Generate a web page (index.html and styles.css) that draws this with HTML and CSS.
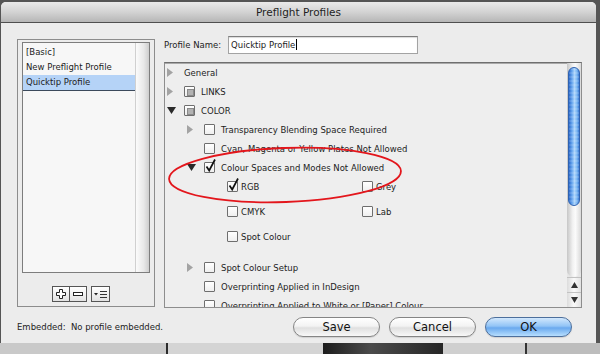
FILE: index.html
```html
<!DOCTYPE html>
<html lang="en">
<head>
    <meta charset="UTF-8">
    <title>Preflight Profiles</title>
    <link rel="stylesheet" href="styles.css">
</head>
<body>
    <div class="window">
        <div class="titlebar">Preflight Profiles</div>
        <div class="content">
            <div class="left-col">
                <div class="profiles-box">
                    <div class="profiles-list">
                        <ul class="profiles">
                            <li>[Basic]</li>
                            <li>New Preflight Profile</li>
                            <li class="selected">Quicktip Profile</li>
                        </ul>
                        <div class="list-track"></div>
                    </div>
                    <div class="list-tools">
                        <div class="tool-pair">
                            <span class="tool">
                                <svg width="10" height="10" viewBox="0 0 10 10"><path d="M3.5 0.5h3v3h3v3h-3v3h-3v-3h-3v-3h3z" fill="#fff" stroke="#222" stroke-width="1"/></svg>
                            </span>
                            <span class="tool tool-minus">
                                <svg width="10" height="4" viewBox="0 0 10 4"><rect x="0.5" y="0.5" width="9" height="3" fill="#fff" stroke="#222" stroke-width="1"/></svg>
                            </span>
                        </div>
                        <span class="tool tool-menu">
                            <svg width="13" height="9" viewBox="0 0 13 9"><path d="M0 3h4l-2 2.5z" fill="#222"/><path d="M6 1.5h7M6 4.5h7M6 7.5h7" stroke="#333" stroke-width="1"/></svg>
                        </span>
                    </div>
                </div>
                <div class="embedded">Embedded:&nbsp; No profile embedded.</div>
            </div>

            <div class="right-col">
                <div class="name-row">
                    <label class="name-label">Profile Name:</label>
                    <div class="name-input">Quicktip Profile<span class="caret"></span></div>
                </div>

                <div class="tree">
                    <div class="tree-rows">
                        <div class="row lvl0">
                            <span class="twisty"><svg width="6" height="9" viewBox="0 0 6 9"><path d="M0 0L6 4.5L0 9z" fill="#a3a3a3"/></svg></span>
                            <span class="label">General</span>
                        </div>
                        <div class="row lvl0">
                            <span class="twisty"><svg width="6" height="9" viewBox="0 0 6 9"><path d="M0 0L6 4.5L0 9z" fill="#a3a3a3"/></svg></span>
                            <span class="check mixed"></span>
                            <span class="label">LINKS</span>
                        </div>
                        <div class="row lvl0">
                            <span class="twisty"><svg width="9" height="7" viewBox="0 0 9 7"><path d="M0 0H9L4.5 7z" fill="#2a2a2a"/></svg></span>
                            <span class="check mixed"></span>
                            <span class="label">COLOR</span>
                        </div>
                        <div class="row lvl1">
                            <span class="twisty"><svg width="6" height="9" viewBox="0 0 6 9"><path d="M0 0L6 4.5L0 9z" fill="#a3a3a3"/></svg></span>
                            <span class="check"></span>
                            <span class="label">Transparency Blending Space Required</span>
                        </div>
                        <div class="row lvl1">
                            <span class="twisty"></span>
                            <span class="check"></span>
                            <span class="label">Cyan, Magenta or Yellow Plates Not Allowed</span>
                        </div>
                        <div class="row lvl1">
                            <span class="twisty"><svg width="9" height="7" viewBox="0 0 9 7"><path d="M0 0H9L4.5 7z" fill="#2a2a2a"/></svg></span>
                            <span class="check checked"><svg class="tick" width="12" height="14" viewBox="0 0 12 14"><path d="M1.5 7.5L4.2 11.5L10 0.5" fill="none" stroke="#111" stroke-width="1.7"/></svg></span>
                            <span class="label">Colour Spaces and Modes Not Allowed</span>
                        </div>
                        <div class="options">
                            <div class="opt">
                                <span class="check checked"><svg class="tick" width="12" height="14" viewBox="0 0 12 14"><path d="M1.5 7.5L4.2 11.5L10 0.5" fill="none" stroke="#111" stroke-width="1.7"/></svg></span>
                                <span class="label">RGB</span>
                            </div>
                            <div class="opt">
                                <span class="check"></span>
                                <span class="label">Grey</span>
                            </div>
                            <div class="opt">
                                <span class="check"></span>
                                <span class="label">CMYK</span>
                            </div>
                            <div class="opt">
                                <span class="check"></span>
                                <span class="label">Lab</span>
                            </div>
                            <div class="opt">
                                <span class="check"></span>
                                <span class="label">Spot Colour</span>
                            </div>
                        </div>
                        <div class="row lvl1 spaced">
                            <span class="twisty"><svg width="6" height="9" viewBox="0 0 6 9"><path d="M0 0L6 4.5L0 9z" fill="#a3a3a3"/></svg></span>
                            <span class="check"></span>
                            <span class="label">Spot Colour Setup</span>
                        </div>
                        <div class="row lvl1">
                            <span class="twisty"></span>
                            <span class="check"></span>
                            <span class="label">Overprinting Applied in InDesign</span>
                        </div>
                        <div class="row lvl1">
                            <span class="twisty"></span>
                            <span class="check"></span>
                            <span class="label">Overprinting Applied to White or [Paper] Colour</span>
                        </div>
                    </div>

                    <div class="scrollbar">
                        <div class="track"><div class="thumb"></div></div>
                        <div class="arrow"><svg width="7" height="6" viewBox="0 0 7 6"><path d="M3.5 0L7 6H0z" fill="#333"/></svg></div>
                        <div class="arrow"><svg width="7" height="6" viewBox="0 0 7 6"><path d="M0 0H7L3.5 6z" fill="#333"/></svg></div>
                    </div>

                    <!-- red hand-drawn ring over the tree -->
                    <svg class="annotation" width="418" height="246" viewBox="0 0 418 246">
                        <ellipse cx="120" cy="112" rx="116" ry="27" transform="rotate(-2 120 112)" fill="none" stroke="#e3161c" stroke-width="1.8"/>
                    </svg>
                </div>

                <div class="buttons">
                    <button class="btn">Save</button>
                    <button class="btn">Cancel</button>
                    <button class="btn btn-default">OK</button>
                </div>
            </div>
        </div>
    </div>
    <div class="backdrop">
        <div class="bd-left"></div>
        <div class="bd-photo"></div>
        <div class="bd-mid"></div>
        <div class="bd-right"></div>
    </div>
</body>
</html>
```

FILE: styles.css
```css
* {
    box-sizing: border-box;
}

body {
    margin: 0;
    padding-top: 2px;
    width: 600px;
    height: 354px;
    overflow: hidden;
    background: #555;
    font-family: "DejaVu Sans", sans-serif;
    font-size: 8.5px;
    color: #1c1c1c;
}

.window {
    margin-left: 1px;
    width: 595px;
    height: 341px;
    background: #ececec;
    border-radius: 5px 5px 0 0;
    display: flex;
    flex-direction: column;
}

.titlebar {
    height: 21px;
    border-bottom: 1px solid #4f4f4f;
    border-radius: 5px 5px 0 0;
    background: linear-gradient(#eaeaea, #d3d3d3 50%, #b6b6b6);
    text-align: center;
    font-size: 10.5px;
    line-height: 20px;
    color: #1e1e1e;
}

.content {
    display: grid;
    grid-template-columns: 138px 418px;
    column-gap: 9px;
    padding-left: 16px;
}

/* left column */

.profiles-box {
    margin-top: 16px;
    height: 268px;
    border: 1px solid #8c8c8c;
    padding: 2px 4px 0;
}

.profiles-list {
    height: 231px;
    border: 1px solid #7d7d7d;
    display: flex;
    background: #f7f7f7;
}

.profiles {
    list-style: none;
    margin: 0;
    padding: 2px 0 0;
    flex: 1;
}

.profiles li {
    height: 15px;
    line-height: 15px;
    padding-left: 3px;
    white-space: nowrap;
}

.profiles li.selected {
    height: 16px;
    background: #b5d3f7;
    border-bottom: 1px solid #3c4a5c;
}

.list-track {
    width: 14px;
    border-left: 1px solid #d0d0d0;
    background: linear-gradient(to right, #fbfbfb, #e8e8e8 60%, #cdcdcd);
}

.list-tools {
    display: flex;
    gap: 4px;
    margin-top: 13px;
    padding-left: 30px;
}

.tool-pair {
    display: flex;
    border: 1px solid #555;
}

.tool {
    width: 16px;
    height: 16px;
    display: flex;
    align-items: center;
    justify-content: center;
    background: linear-gradient(#fff, #e2e2e2);
}

.tool-pair .tool {
    height: 14px;
}

.tool-minus {
    width: 17px;
    border-left: 1px solid #555;
}

.tool-menu {
    width: 19px;
    border: 1px solid #555;
}

.embedded {
    margin-top: 14px;
    line-height: 12px;
    white-space: nowrap;
}

/* right column */

.name-row {
    display: flex;
    align-items: center;
    gap: 7px;
    height: 18px;
    margin-top: 13px;
}

.name-input {
    width: 190px;
    height: 18px;
    border: 1px solid #a3a3a3;
    border-top-color: #7f7f7f;
    background: #fff;
    box-shadow: inset 0 1px 1px rgba(0, 0, 0, 0.15);
    padding-left: 2px;
    line-height: 16px;
}

.caret {
    display: inline-block;
    width: 1px;
    height: 11px;
    margin-left: 1px;
    vertical-align: -2px;
    background: #000;
}

.tree {
    position: relative;
    display: flex;
    height: 246px;
    margin-top: 8px;
    border: 1px solid #8d8d8d;
    border-top-color: #6f6f6f;
    box-shadow: inset 0 1px 0 #a9a9a9;
    background: #eeeeee;
    overflow: hidden;
}

.tree-rows {
    flex: 1;
    overflow: hidden;
}

.row {
    display: flex;
    align-items: center;
    height: 19px;
    white-space: nowrap;
}

.lvl0 {
    padding-left: 2px;
}

.lvl1 {
    padding-left: 22px;
}

.spaced {
    margin-top: 12px;
}

.twisty {
    width: 17px;
    flex: none;
    display: flex;
    align-items: center;
}

.check {
    position: relative;
    width: 11px;
    height: 11px;
    flex: none;
    margin-right: 6px;
    border: 1px solid #6e6e6e;
    border-radius: 1px;
    background: linear-gradient(#fff, #efefef);
}

.check.mixed::after {
    content: "";
    position: absolute;
    left: 2px;
    top: 2px;
    width: 5px;
    height: 5px;
    border: 1px solid #8a8a8a;
    background: #b2b2b2;
}

.tick {
    position: absolute;
    left: 0;
    top: -4px;
}

.options {
    display: grid;
    grid-template-columns: 135px 135px;
    row-gap: 6px;
    padding-left: 62px;
}

.opt {
    display: flex;
    align-items: center;
    height: 19px;
}

.opt .check {
    margin-right: 3px;
}

.scrollbar {
    width: 14px;
    flex: none;
    display: flex;
    flex-direction: column;
    background: #e6e6e6;
}

.track {
    flex: 1;
    padding: 4px 1px 0;
    border-radius: 0 0 7px 7px;
    background: linear-gradient(to right, #c6c6c6, #f1f1f1 40%, #fbfbfb 60%, #d9d9d9);
}

.thumb {
    height: 139px;
    border: 1px solid #2f62b0;
    border-radius: 6px;
    background:
        repeating-linear-gradient(rgba(255, 255, 255, 0.12) 0 2px, rgba(255, 255, 255, 0) 2px 4px),
        linear-gradient(to right, #2b6acb, #66a5ee 30%, #acd4fb 55%, #79b5f2 80%, #3a7ad4);
}

.arrow {
    height: 15px;
    display: flex;
    align-items: center;
    justify-content: center;
    border-top: 1px solid #c2c2c2;
    background: linear-gradient(to right, #dcdcdc, #fafafa 50%, #e2e2e2);
}

.annotation {
    position: absolute;
    left: 0;
    top: 0;
    pointer-events: none;
}

.buttons {
    display: flex;
    justify-content: flex-end;
    gap: 9px;
    margin-top: 9px;
    padding-right: 10px;
}

.btn {
    width: 87px;
    height: 20px;
    padding: 0;
    border: 1px solid #858585;
    border-radius: 10px;
    background: linear-gradient(#ffffff, #f3f3f3 45%, #e0e0e0 55%, #f8f8f8);
    box-shadow: 0 1px 1px rgba(0, 0, 0, 0.12);
    font-family: "DejaVu Sans", sans-serif;
    font-size: 11.5px;
    line-height: 18px;
    color: #111;
}

.btn-default {
    border-color: #4d6f9c;
    background: linear-gradient(#d2e8fd, #92c4f6 45%, #6aa9ee 55%, #b7defe);
}

/* desktop showing under the dialog */

.backdrop {
    display: flex;
    height: 11px;
}

.bd-left {
    width: 323px;
    background: linear-gradient(to right, #c9c9c9 166px, #2c2c2c 166px 168px, #d4d4d4 168px);
}

.bd-photo {
    width: 120px;
    background: linear-gradient(to right, #1d1d1d, #4b4b4b 40%, #262626);
}

.bd-mid {
    width: 84px;
    background: #cfcfcf;
    border-right: 2px solid #333;
}

.bd-right {
    flex: 1;
    background: #bdbdbd;
}
```
